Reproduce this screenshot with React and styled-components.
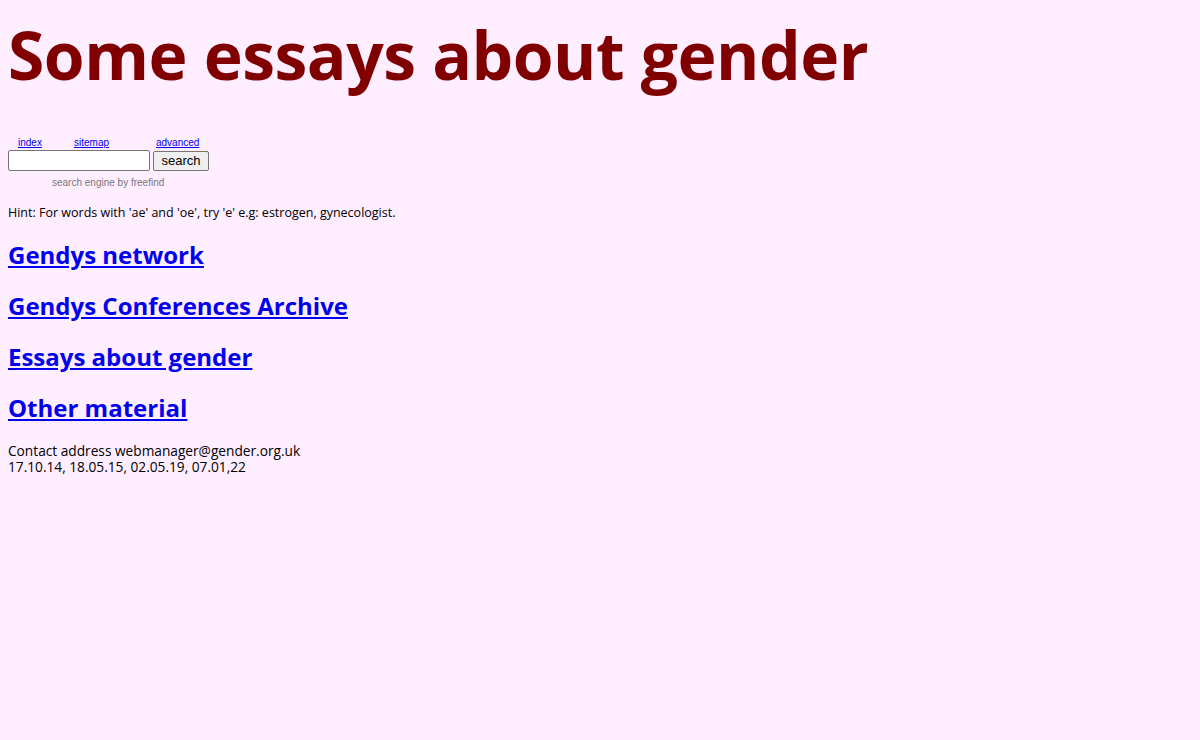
import styled, { createGlobalStyle } from "styled-components"

const GlobalStyle = createGlobalStyle`
    html, body {
        margin: 0;
        background-color: #ffeeff;
    }
    body {
        padding: 8px;
        font-family: "Open Sans", "Noto Sans", sans-serif;
        color: #000000;
    }
`

const links = [
    "Gendys network",
    "Gendys Conferences Archive",
    "Essays about gender",
    "Other material",
]

export default function App() {
    return (
        <Page>
            <GlobalStyle />
            <Title>Some essays about gender</Title>

            <SearchBox>
                <SearchLinks>
                    <SmallLink href="#">index</SmallLink>
                    <SmallLink href="#">sitemap</SmallLink>
                    <SmallLink href="#">advanced</SmallLink>
                </SearchLinks>
                <SearchRow>
                    <SearchInput type="text" />
                    <SearchButton type="button">search</SearchButton>
                </SearchRow>
                <Credit>search engine by freefind</Credit>
            </SearchBox>

            <Hint>Hint: For words with 'ae' and 'oe', try 'e' e.g: estrogen, gynecologist.</Hint>

            {links.map((text) => (
                <Heading key={text}>
                    <a href="#">{text}</a>
                </Heading>
            ))}

            <Footer>
                <FooterLine>Contact address webmanager@gender.org.uk</FooterLine>
                <FooterLine>17.10.14, 18.05.15, 02.05.19, 07.01,22</FooterLine>
            </Footer>
        </Page>
    )
}

const Page = styled.div`
    display: flex;
    flex-direction: column;
    align-items: flex-start;
`

const Title = styled.h1`
    margin: 4px 0 0 0;
    font-size: 66px;
    line-height: 84px;
    font-weight: 700;
    color: #800000;
    letter-spacing: -0.5px;
`

const SearchBox = styled.div`
    margin-top: 40px;
    display: flex;
    flex-direction: column;
    width: 202px;
    font-family: "Liberation Sans", Arial, sans-serif;
`

const SearchLinks = styled.div`
    display: flex;
    padding-left: 10px;
    height: 12px;
    align-items: center;

    a:nth-child(1) { width: 56px; }
    a:nth-child(2) { width: 82px; }
`

const SmallLink = styled.a`
    font-size: 10px;
    color: #0000ee;
    text-decoration: underline;
`

const SearchRow = styled.div`
    display: flex;
    align-items: center;
    gap: 3px;
    margin-top: 2px;
`

const SearchInput = styled.input`
    box-sizing: border-box;
    width: 142px;
    height: 21px;
    border: 1px solid #767676;
    border-radius: 2px;
    background: #ffffff;
    padding: 1px 2px;
`

const SearchButton = styled.button`
    box-sizing: border-box;
    width: 56px;
    height: 20px;
    font-family: "Liberation Sans", Arial, sans-serif;
    font-size: 13px;
    color: #000000;
    background: #efefef;
    border: 1px solid #767676;
    border-radius: 2px;
    padding: 0;
`

const Credit = styled.div`
    margin-top: 6px;
    padding-left: 44px;
    font-size: 10px;
    color: #777777;
`

const Hint = styled.p`
    margin: 17px 0 0 0;
    font-size: 12.5px;
    line-height: 16px;
`

const Heading = styled.h2`
    margin: 17px 0 0 0;
    font-size: 24px;
    line-height: 34px;
    font-weight: 700;

    a {
        color: #0000ee;
        text-decoration: underline;
    }
`

const Footer = styled.div`
    margin-top: 17px;
    display: flex;
    flex-direction: column;
    font-size: 13.7px;
`

const FooterLine = styled.span`
    display: block;
    height: 16px;
    line-height: 17px;
`
